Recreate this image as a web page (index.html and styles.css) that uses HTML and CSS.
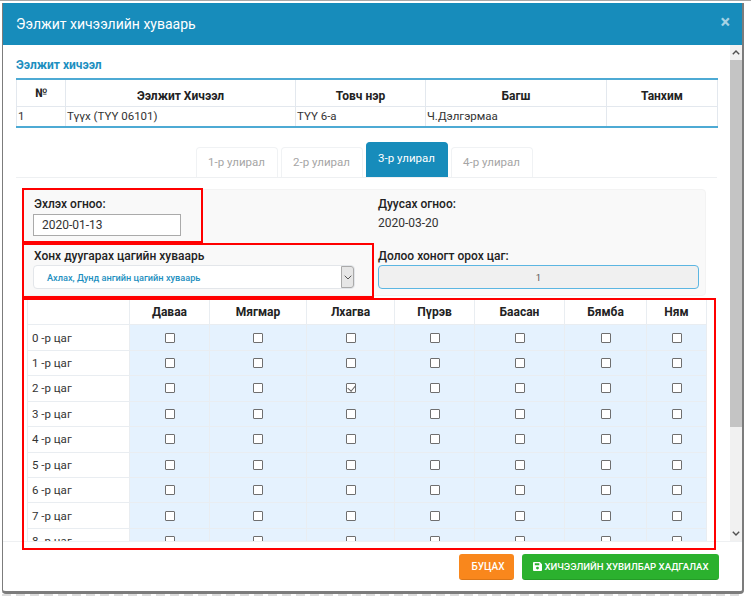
FILE: index.html
```html
<!DOCTYPE html>
<html lang="mn">
<head>
<meta charset="utf-8">
<title>Ээлжит хичээлийн хуваарь</title>
<link rel="stylesheet" href="styles.css">
</head>
<body>
<div class="modal">
  <header class="modal-head">
    <h1>Ээлжит хичээлийн хуваарь</h1>
    <span class="close">×</span>
  </header>
  <div class="modal-main">
    <div class="modal-body">
      <h2>Ээлжит хичээл</h2>
      <table class="info">
        <colgroup><col class="i1"><col class="i2"><col class="i3"><col class="i4"><col class="i5"></colgroup>
        <thead><tr><th class="no">№</th><th>Ээлжит Хичээл</th><th>Товч нэр</th><th>Багш</th><th>Танхим</th></tr></thead>
        <tbody><tr><td>1</td><td>Түүх (ТҮҮ 06101)</td><td>ТҮҮ 6-а</td><td>Ч.Дэлгэрмаа</td><td></td></tr></tbody>
      </table>
      <nav class="tabs">
        <a class="tab">1-р улирал</a>
        <a class="tab">2-р улирал</a>
        <a class="tab active">3-р улирал</a>
        <a class="tab">4-р улирал</a>
      </nav>
      <section class="panel">
        <div class="field">
          <label>Эхлэх огноо:</label>
          <input class="date" type="text" value="2020-01-13">
        </div>
        <div class="field">
          <label>Дуусах огноо:</label>
          <div class="plain">2020-03-20</div>
        </div>
        <div class="field low">
          <label>Хонх дуугарах цагийн хуваарь</label>
          <div class="select"><span>Ахлах, Дунд ангийн цагийн хуваарь</span>
            <b class="select-btn"><svg width="8" height="5" viewBox="0 0 8 5"><path d="M.7.7 4 4l3.3-3.3" fill="none" stroke="#555" stroke-width="1"/></svg></b>
          </div>
        </div>
        <div class="field low">
          <label>Долоо хоногт орох цаг:</label>
          <div class="hours">1</div>
        </div>
      </section>
      <table class="grid">
        <colgroup><col class="g0"><col class="g1"><col class="g2"><col class="g3"><col class="g4"><col class="g5"><col class="g6"><col class="g7"></colgroup>
        <thead><tr><th></th><th>Даваа</th><th>Мягмар</th><th>Лхагва</th><th>Пүрэв</th><th>Баасан</th><th>Бямба</th><th>Ням</th></tr></thead>
        <tbody id="rows"></tbody>
      </table>
    </div>
    <div class="scrollbar">
      <svg class="arrow" width="8" height="5" viewBox="0 0 8 5"><path d="M.8 4.2 4 1l3.2 3.2" fill="none" stroke="#505050" stroke-width="1.4"/></svg>
      <div class="track"><div class="thumb"></div></div>
      <svg class="arrow" width="8" height="5" viewBox="0 0 8 5"><path d="M.8.8 4 4l3.2-3.2" fill="none" stroke="#505050" stroke-width="1.4"/></svg>
    </div>
  </div>
  <footer class="modal-foot">
    <button class="btn orange">БУЦАХ</button>
    <button class="btn green"><svg width="9" height="9" viewBox="0 0 10 10"><path fill="#fff" fill-rule="evenodd" d="M1 0h6.6L10 2.4V9a1 1 0 0 1-1 1H1a1 1 0 0 1-1-1V1a1 1 0 0 1 1-1Zm1 1.3v2.4h5V1.3H2Zm3 3.9a1.6 1.6 0 1 0 0 3.2 1.6 1.6 0 0 0 0-3.2Z"/></svg>ХИЧЭЭЛИЙН ХУВИЛБАР ХАДГАЛАХ</button>
  </footer>
  <div class="mark m1"></div>
  <div class="mark m2"></div>
  <div class="mark m3"></div>
</div>
<div class="under"></div>
<script src="app.js"></script>
</body>
</html>
```
FILE: app.js
```js
var tbody = document.getElementById('rows');
var html = '';
for (var r = 0; r < 9; r++) {
  html += '<tr><td class="hour">' + r + ' -р цаг</td>';
  for (var d = 0; d < 7; d++) {
    html += '<td class="cell"><input type="checkbox" class="check"' + (r === 2 && d === 2 ? ' checked' : '') + '></td>';
  }
  html += '</tr>';
}
tbody.innerHTML = html;
```
FILE: styles.css
```css
* { box-sizing: border-box; }
html, body { margin: 0; height: 100%; overflow: hidden; }
body {
  background: #fff;
  font-family: Roboto, "Liberation Sans", sans-serif;
  color: #333;
  border-top: 1px solid #a8a8a8;
  padding: 2px 0 0 2px;
}
.modal {
  position: relative;
  width: 742px;
  height: 591px;
  background: #fff;
  border: solid #7c7c7c;
  border-width: 0 2px 3px 1px;
  border-radius: 0 0 4px 4px;
  display: flex;
  flex-direction: column;
}
.under {
  width: 741px;
  height: 2px;
  background: repeating-linear-gradient(90deg, #dcdcdc 0 9px, #fff 9px 14px);
}
.modal-head {
  flex: none;
  height: 42px;
  background: #178cbb;
  display: flex;
  align-items: center;
  justify-content: space-between;
  padding: 0 11px 0 13px;
  color: #fff;
}
.modal-head h1 { margin: 0; font-size: 14px; font-weight: 400; }
.close { font-size: 18px; font-weight: 700; color: #a6d2e4; margin: -6px 1px 0 0; }
.modal-main { flex: 1; display: flex; min-height: 0; }
.modal-body { flex: 1; min-width: 0; padding: 13px 13px 0; overflow: hidden; }
h2 { margin: 0 0 6px; font-size: 12px; line-height: 14px; font-weight: 700; color: #1d8fc0; }
table { border-collapse: collapse; table-layout: fixed; }
.info { width: 701px; font-size: 11.5px; border-top: 2px solid #4daad4; border-bottom: 2px solid #4daad4; }
.i1 { width: 49px; } .i2 { width: 230px; } .i3 { width: 130px; } .i4 { width: 181px; } .i5 { width: 111px; }
.info th, .info td { border: 1px solid #e3e8ee; }
.info th { height: 27px; font-size: 12px; font-weight: 700; color: #222; padding: 6px 0 0; }
.info th.no { padding: 0; }
.info td { height: 21px; padding: 0 1px; color: #333; }
.tabs { display: flex; justify-content: center; align-items: flex-end; gap: 3px; height: 50px; margin: 0 0 11px; border-bottom: 1px solid #eef0f2; width: 701px; padding-right: 5px; }
.tab { width: 82px; height: 30px; border: 1px solid #f0f2f4; border-bottom: 0; border-radius: 4px 4px 0 0; font-size: 11.5px; color: #a5a5a5; display: flex; align-items: center; justify-content: center; padding-bottom: 2px; }
.tab.active { height: 35px; background: #178cbb; border-color: #178cbb; color: #fff; padding-bottom: 5px; }
.panel {
  width: 684px;
  margin-left: 6px;
  height: 107px;
  background: #f9f9f9;
  border-radius: 4px;
  border: 1px solid #f3f3f3;
  display: grid;
  grid-template-columns: 344px 1fr;
  grid-template-rows: 53px 1fr;
  padding: 0 6px 0 10px;
  font-size: 12px;
}
.field { display: flex; flex-direction: column; padding-top: 6px; }
.field label { font-size: 12px; line-height: 16px; font-weight: 500; color: #222; margin: 0 0 2px 1px; }
.field.low { padding-top: 5px; }
.field.low label { margin-bottom: 1px; }
.panel .field:nth-child(even) { margin-left: 1px; }
.panel .field:nth-child(even) label { margin-left: 0; }
.date { width: 148px; height: 22px; border: 1px solid #aaa; background: #fff; font: 12px Roboto, sans-serif; color: #333; padding: 0 8px; border-radius: 0; }
.plain { font-size: 12px; line-height: 18px; }
.select { position: relative; width: 322px; height: 24px; background: #fff; border: 1px solid #e3e6ea; border-radius: 4px; display: flex; align-items: center; padding-left: 13px; font-size: 9.2px; font-weight: 500; color: #1d8fc0; }
.select-btn { position: absolute; right: 0; top: 0; bottom: 0; width: 13px; background: #e6e6e6; border: 1px solid #aaa; border-radius: 0 3px 3px 0; display: flex; align-items: center; justify-content: center; }
.hours { width: 321px; height: 24px; background: #f0f0f0; border: 1px solid #5cb6e2; border-radius: 4px; display: flex; align-items: center; justify-content: center; font-size: 9.5px; color: #555; }
.grid { width: 679px; margin: 3px 0 0 11px; font-size: 11.5px; }
.g0 { width: 102px; } .g1 { width: 80px; } .g2 { width: 97px; } .g3 { width: 88px; } .g4 { width: 80px; } .g5 { width: 90px; } .g6 { width: 82px; } .g7 { width: 60px; }
.grid th, .grid td { border: 1px solid #e9edf1; padding: 0; }
.grid th { height: 25.4px; font-size: 12px; font-weight: 700; color: #222; }
.grid tbody tr { height: 25.45px; }
.hour { padding-left: 4px !important; color: #333; }
.cell { background: #e5f2fe; text-align: center; vertical-align: middle; }
.check {
  appearance: none;
  -webkit-appearance: none;
  display: block;
  position: relative;
  width: 10px;
  height: 10px;
  margin: 0 auto;
  background: #fff;
  border: 1px solid #6f6f6f;
  border-radius: 1px;
}
.check:checked::after {
  content: "";
  position: absolute;
  left: 2px;
  top: 0;
  width: 4px;
  height: 6px;
  border: solid #666;
  border-width: 0 1px 1px 0;
  transform: rotate(40deg);
}
.scrollbar { flex: none; width: 12px; background: #f1f1f1; display: flex; flex-direction: column; align-items: center; }
.arrow { flex: none; margin: 5px 0; }
.track { flex: 1; width: 100%; }
.thumb { width: 100%; height: 367px; background: #c4c4c4; }
.modal-foot { flex: none; height: 50px; border-top: 1px solid #eef0f2; display: flex; justify-content: flex-end; align-items: flex-start; gap: 8px; padding: 12px 23px 0 0; }
.btn { height: 26px; border: 0; border-bottom: 1px solid rgba(0,0,0,.12); border-radius: 3px; color: #fff; font: 500 9.6px Roboto, sans-serif; display: flex; align-items: center; justify-content: center; gap: 3px; padding: 0; }
.orange { width: 55px; background: #f9871c; padding-left: 3px; font-size: 10px; }
.green { width: 197px; background: #2bb12e; }
.mark { position: absolute; border: 2px solid #f00; pointer-events: none; }
.m1 { left: 19px; top: 185px; width: 181px; height: 55px; }
.m2 { left: 19px; top: 240px; width: 352px; height: 55px; }
.m3 { left: 19px; top: 295px; width: 694px; height: 252px; }
```
